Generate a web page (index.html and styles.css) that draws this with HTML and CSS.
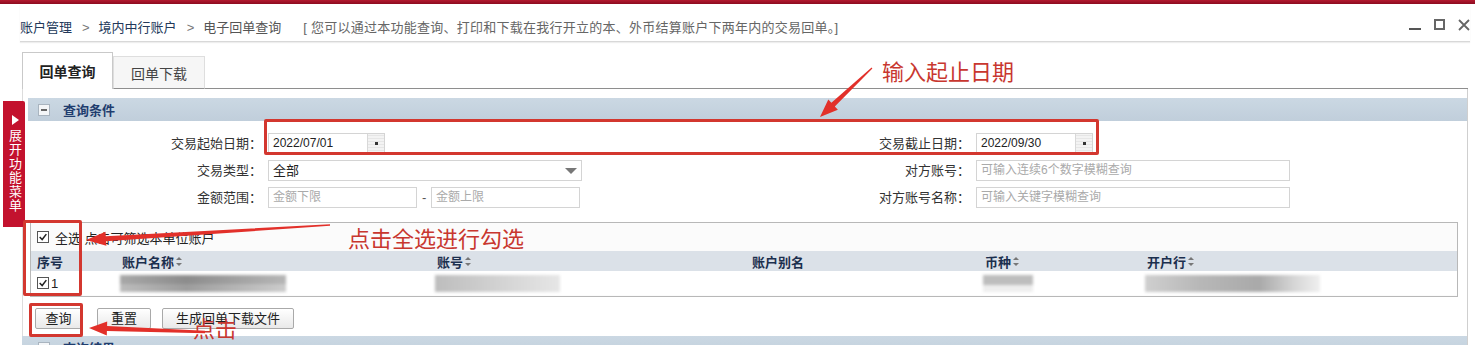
FILE: index.html
```html
<!DOCTYPE html>
<html lang="zh-CN">
<head>
<meta charset="utf-8">
<title>电子回单查询</title>
<link rel="stylesheet" href="styles.css">
</head>
<body>
<div class="topbar"></div>
<header class="crumbs">
  <span class="crumb">账户管理</span><span class="sep">&gt;</span><span class="crumb">境内中行账户</span><span class="sep">&gt;</span><span class="crumb cur">电子回单查询</span>
  <span class="desc">[ 您可以通过本功能查询、打印和下载在我行开立的本、外币结算账户下两年内的交易回单。]</span>
  <div class="winctl">
    <span class="wmin"></span>
    <span class="wmax"></span>
    <svg class="wclose" viewBox="0 0 12 12" width="12" height="12"><path d="M1 1L11 11M11 1L1 11"/></svg>
  </div>
</header>
<main class="main">
  <div class="tabs">
    <div class="tab active">回单查询</div>
    <div class="tab">回单下载</div>
    <div class="tabfill"></div>
  </div>
  <section class="panel">
    <div class="sechead"><span class="collapse"></span>查询条件</div>
    <div class="form">
      <label class="lbl">交易起始日期：</label>
      <div class="fld"><div class="inp date">2022/07/01<span class="datebtn"></span></div></div>
      <label class="lbl">交易截止日期：</label>
      <div class="fld"><div class="inp date">2022/09/30<span class="datebtn"></span></div></div>

      <label class="lbl">交易类型：</label>
      <div class="fld"><div class="inp sel">全部<span class="caret"></span></div></div>
      <label class="lbl">对方账号：</label>
      <div class="fld"><div class="inp long ph">可输入连续6个数字模糊查询</div></div>

      <label class="lbl">金额范围：</label>
      <div class="fld"><div class="inp amt ph">金额下限</div><span class="dash">-</span><div class="inp amt ph">金额上限</div></div>
      <label class="lbl">对方账号名称：</label>
      <div class="fld"><div class="inp long ph">可输入关键字模糊查询</div></div>
    </div>

    <div class="acct">
      <div class="allrow"><span class="cb"><svg viewBox="0 0 12 12" width="10" height="10"><path d="M2 6L5 9L10 2.5"/></svg></span>全选 点击可筛选本单位账户</div>
      <div class="grid thead">
        <div class="c">序号</div>
        <div class="c">账户名称<span class="sort"></span></div>
        <div class="c">账号<span class="sort"></span></div>
        <div class="c">账户别名</div>
        <div class="c">币种<span class="sort"></span></div>
        <div class="c">开户行<span class="sort"></span></div>
      </div>
      <div class="grid trow">
        <div class="c"><span class="cb"><svg viewBox="0 0 12 12" width="10" height="10"><path d="M2 6L5 9L10 2.5"/></svg></span>1</div>
        <div class="c"><span class="blur b-name"></span></div>
        <div class="c"><span class="blur b-no"></span></div>
        <div class="c"></div>
        <div class="c"><span class="blur b-cur"></span></div>
        <div class="c"><span class="blur b-bank"></span></div>
      </div>
    </div>

    <div class="btns">
      <button class="btn b1">查询</button>
      <button class="btn b2">重置</button>
      <button class="btn b3">生成回单下载文件</button>
    </div>

    <div class="sechead bottom"><span class="collapse"></span>查询结果</div>
  </section>
</main>

<aside class="sidemenu">
  <span class="tri"></span>
  <span class="sidetext">展开功能菜单</span>
</aside>

<div class="rbox rb1"></div>
<div class="rbox rb2"></div>
<div class="rbox rb3"></div>
<div class="note n1">输入起止日期</div>
<div class="note n2">点击全选进行勾选</div>
<div class="note n3">点击</div>
<svg class="arrows" width="1475" height="345" viewBox="0 0 1475 345">
  <polygon points="871.6,67.6 831.4,102.8 828.3,99.6 820,117 837.9,109.8 834.8,106.5 872.4,68.4"/>
  <polygon points="330,224.2 105.8,236.3 105.5,231.8 86,240 106.4,245.8 106.1,241.3 330,225.8"/>
  <polygon points="205,330.8 107.1,326.1 107.2,321.6 89,328 106.8,335.6 106.9,331.1 205,333.2"/>
</svg>
</body>
</html>
```

FILE: styles.css
```css
* { box-sizing: border-box; margin: 0; padding: 0; }
html, body { width: 1475px; height: 345px; overflow: hidden; background: #fff; }
body {
  position: relative;
  font-family: "Liberation Sans", "Noto Sans CJK SC", sans-serif;
  font-size: 13px;
  color: #333;
}

.topbar { height: 4px; background: linear-gradient(#b3192f, #8c0b1f); }

.crumbs {
  height: 38px;
  margin: 0 5px 0 20px;
  padding-top: 10px;
  display: flex;
  align-items: center;
  border-bottom: 1px solid #d8d8d8;
  box-shadow: 0 1px 1px #eeeeee;
  line-height: 18px;
  white-space: nowrap;
}
.crumb { color: #23395a; }
.crumb.cur { color: #555; }
.sep { color: #777; margin: 0 9px 0 10px; font-family: "Liberation Sans", sans-serif; }
.desc { color: #666; margin-left: 22px; letter-spacing: 0.25px; }
.winctl { margin-left: auto; display: flex; align-items: center; gap: 13px; margin-top: -6px; }
.wmin { width: 12px; height: 2px; background: #555; margin-top: 8px; }
.wmax { width: 11px; height: 11px; border: 2px solid #666; }
.wclose { stroke: #666; stroke-width: 1.8; fill: none; }

.main { padding: 10px 7px 0 22px; }

.tabs { display: flex; align-items: flex-end; height: 37px; }
.tab {
  width: 92px;
  height: 33px;
  border: 1px solid #dedede;
  border-bottom: 1px solid #8e8e8e;
  background: #f6f6f6;
  color: #444;
  font-size: 14px;
  display: flex;
  align-items: center;
  justify-content: center;
}
.tab.active {
  width: 91px;
  height: 37px;
  border: 1px solid #c9c9c9;
  border-bottom: none;
  background: #fff;
  color: #222;
  font-weight: bold;
}
.tabfill { flex: 1; align-self: stretch; border-bottom: 1px solid #8e8e8e; }

.panel {
  border-left: 1px solid #dcdcdc;
  border-right: 1px solid #cfcfcf;
  padding: 9px 0 0 5px;
  height: 260px;
}

.sechead {
  height: 23px;
  display: flex;
  align-items: center;
  padding-left: 10px;
  background: linear-gradient(#cbd8e3, #c0cedb);
  color: #1f3d6e;
  font-weight: bold;
  font-size: 13px;
}
.collapse {
  width: 12px;
  height: 12px;
  margin-right: 13px;
  border: 1px solid #a9b4bf;
  background: #f4f6f8;
  position: relative;
}
.collapse::after {
  content: "";
  position: absolute;
  left: 2px; right: 2px; top: 4px;
  height: 2px;
  background: #666;
}
.sechead.bottom { margin-top: 7px; margin-left: -6px; padding-left: 16px; }

.form {
  padding-top: 12px;
  display: grid;
  grid-template-columns: 240px 468px 240px 1fr;
  grid-auto-rows: 21px;
  row-gap: 6px;
}
.lbl { text-align: right; padding-right: 6px; line-height: 21px; white-space: nowrap; color: #333; }
.fld { display: flex; align-items: center; }
.inp {
  height: 21px;
  border: 1px solid #d4d4d4;
  background: #fff;
  font-size: 12px;
  line-height: 19px;
  padding-left: 4px;
  display: flex;
  align-items: center;
  color: #222;
  white-space: nowrap;
}
.inp.ph { color: #aaa; }
.inp.date { width: 117px; }
.datebtn {
  margin-left: auto;
  width: 17px;
  height: 19px;
  border-left: 1px solid #d8d8d8;
  background: repeating-linear-gradient(0deg, #f3f3f3 0 2px, #e6e6e6 2px 3px);
  position: relative;
}
.datebtn::after {
  content: "";
  position: absolute;
  left: 7px; top: 8px;
  width: 3px; height: 3px;
  background: #333;
}
.inp.sel { width: 314px; font-size: 13px; }
.caret {
  margin-left: auto;
  margin-right: 4px;
  width: 0; height: 0;
  border-left: 6px solid transparent;
  border-right: 6px solid transparent;
  border-top: 6px solid #777;
}
.inp.amt { width: 149px; }
.dash { width: 4px; margin: 0 5px; color: #555; text-align: center; line-height: 21px; }
.inp.long { width: 314px; }

.acct {
  margin: 14px 9px 0 2px;
  border: 1px solid #b8b8b8;
  height: 75px;
  background: #fbfbfb;
}
.allrow {
  height: 28px;
  padding-left: 6px;
  display: flex;
  align-items: center;
  color: #222;
  white-space: nowrap;
}
.cb {
  width: 12px; height: 12px;
  border: 1px solid #555;
  background: #fff;
  margin-right: 6px;
  display: inline-flex;
  align-items: center;
  justify-content: center;
}
.cb svg { fill: none; stroke: #222; stroke-width: 1.8; }
.grid { display: grid; grid-template-columns: 85px 315px 315px 233px 162px 1fr; }
.thead { height: 20px; background: #dbe1e8; }
.trow { height: 24px; background: #fff; }
.c {
  padding-left: 6px;
  display: flex;
  align-items: center;
  white-space: nowrap;
}
.thead .c { color: #1b2f4e; font-weight: bold; font-size: 13px; }
.trow .c { color: #222; }
.trow .c .cb { margin-right: 2px; }
.sort {
  display: inline-block;
  width: 7px;
  height: 9px;
  margin-left: 1px;
  position: relative;
}
.sort::before, .sort::after {
  content: "";
  position: absolute;
  left: 1px;
  border-left: 3px solid transparent;
  border-right: 3px solid transparent;
}
.sort::before { top: 0; border-bottom: 3px solid #777; }
.sort::after { bottom: 0; border-top: 3px solid #777; }

.blur { display: inline-block; height: 17px; filter: blur(1.6px); margin-left: -2px; }
.b-name { width: 166px; background: linear-gradient(#d2d2d2 0 55%, #ebebeb 55%), linear-gradient(90deg, #ccc, #aaa 40%, #c4c4c4 70%, #ddd); background-blend-mode: multiply; }
.b-no { width: 125px; background: linear-gradient(90deg, #bdbdbd, #d6d6d6 60%, #e6e6e6); }
.b-cur { width: 50px; background: linear-gradient(#bdbdbd 0 60%, #eee 60%); }
.b-bank { width: 175px; background: linear-gradient(90deg, #cfcfcf, #b8b8b8 30%, #a9a9a9 65%, #d5d5d5 85%, #efefef); }

.btns { margin-top: 11px; padding-left: 7px; display: flex; }
.btn {
  height: 21px;
  border: 1px solid #a9a9a9;
  border-radius: 2px;
  background: linear-gradient(#ffffff, #e9e9e9);
  font-family: "Liberation Sans", "Noto Sans CJK SC", sans-serif;
  font-size: 13px;
  color: #222;
  line-height: 19px;
}
.b1 { width: 47px; }
.b2 { width: 54px; margin-left: 15px; }
.b3 { width: 132px; margin-left: 11px; }

.sidemenu {
  position: absolute;
  left: 3px;
  top: 101px;
  width: 22px;
  height: 126px;
  background: #c3122e;
  border-radius: 0 2px 2px 0;
  display: flex;
  flex-direction: column;
  align-items: center;
  padding-top: 14px;
}
.tri {
  width: 0; height: 0;
  border-top: 5px solid transparent;
  border-bottom: 5px solid transparent;
  border-left: 7px solid #fff;
  margin-left: 2px;
}
.sidetext {
  margin-top: 4px;
  writing-mode: vertical-rl;
  color: #fff;
  font-size: 13px;
  letter-spacing: 1px;
  line-height: 22px;
}

.rbox { position: absolute; border: 3px solid #d3372f; border-radius: 2px; }
.rb1 { left: 264px; top: 119px; width: 835px; height: 36px; }
.rb2 { left: 23px; top: 220px; width: 59px; height: 76px; }
.rb3 { left: 29px; top: 303px; width: 54px; height: 34px; }

.note {
  position: absolute;
  font-family: "Noto Sans CJK SC", sans-serif;
  font-size: 22px;
  line-height: 26px;
  color: #c8372f;
  white-space: nowrap;
}
.n1 { left: 882px; top: 57px; }
.n2 { left: 348px; top: 224px; }
.n3 { left: 193px; top: 314px; }

.arrows { position: absolute; left: 0; top: 0; fill: #e2302a; pointer-events: none; }
```
